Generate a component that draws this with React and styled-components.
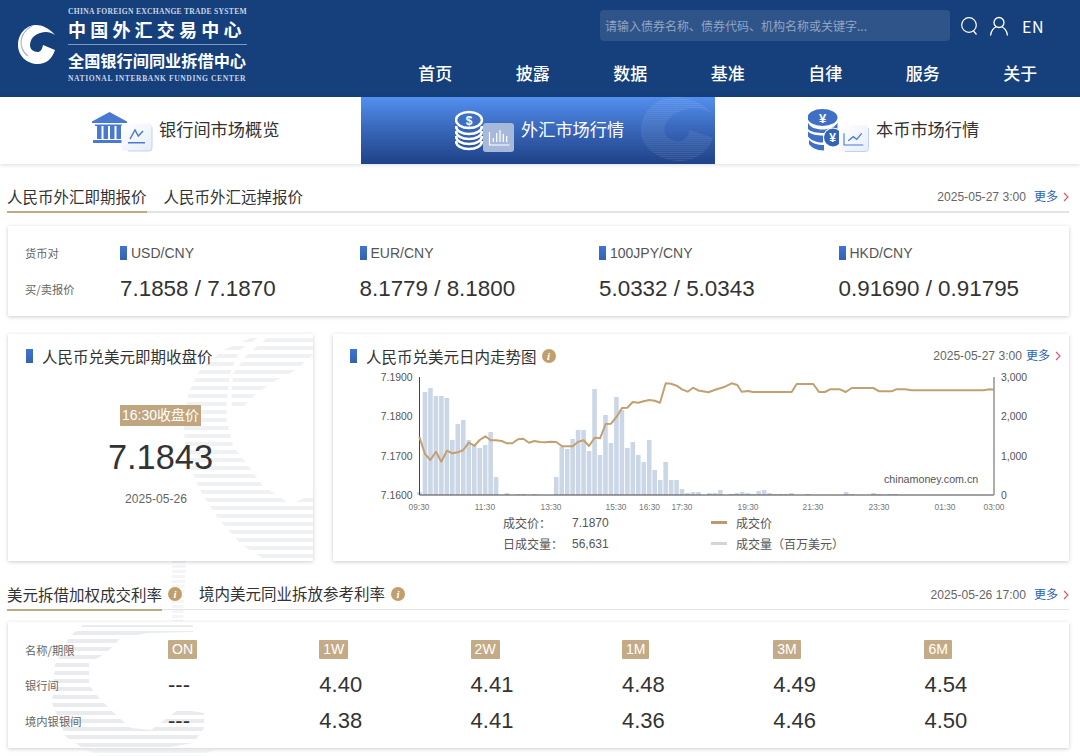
import React from "react";
import styled, { createGlobalStyle } from "styled-components";

const SANS = `"Liberation Sans", "Noto Sans CJK SC", sans-serif`;
const CJK = `"Noto Sans CJK SC", "Liberation Sans", sans-serif`;
const SERIF = `"Liberation Serif", "Noto Sans CJK SC", serif`;

const Global = createGlobalStyle`
  html, body { margin: 0; padding: 0; background: #fff; }
  body { font-family: ${SANS}; color: #333; overflow: hidden; }
  * { box-sizing: border-box; }
`;

const Page = styled.div`
  position: relative;
  width: 1080px;
  height: 756px;
  overflow: hidden;
  background: #fff;
`;

const PageMark = styled.svg`
  position: absolute;
  left: 0;
  top: 0;
`;

/* header */
const Header = styled.header`
  position: relative;
  display: flex;
  justify-content: space-between;
  height: 97px;
  background: #16407c;
`;
const Logo = styled.div`
  display: flex;
  align-items: flex-start;
  padding: 7px 0 0 18px;
  color: #fff;
`;
const LogoMark = styled.svg`
  margin: 18px 12px 0 0;
`;
const LogoText = styled.div`
  display: flex;
  flex-direction: column;
  width: 179px;
`;
const LogoEn = styled.div`
  font-family: ${SERIF};
  font-weight: 700;
  font-size: 7.6px;
  line-height: 9px;
  height: 9px;
  white-space: nowrap;
  color: #c9d4e6;
  letter-spacing: ${(p) => p.$ls};
  margin-top: ${(p) => p.$top || 0};
`;
const LogoCn = styled.div`
  font-family: ${CJK};
  font-weight: ${(p) => p.$weight};
  font-size: ${(p) => p.$size};
  letter-spacing: ${(p) => p.$ls};
  line-height: ${(p) => p.$lh};
  white-space: nowrap;
`;
const LogoRule = styled.div`
  height: 1px;
  background: #7f99bf;
  margin: 2px 0 3px;
`;
const HeaderRight = styled.div`
  display: flex;
  flex-direction: column;
  padding-top: 10px;
`;
const SearchRow = styled.div`
  display: flex;
  align-items: center;
  justify-content: flex-end;
  height: 31px;
  padding-right: 36px;
`;
const Search = styled.div`
  width: 350px;
  height: 31px;
  border-radius: 4px;
  background: #2f5489;
  padding-left: 5px;
  margin-right: 10px;
  font-family: ${CJK};
  font-size: 12px;
  line-height: 31px;
  color: #8fa5c4;
  white-space: nowrap;
`;
const HeadIcon = styled.svg`
  margin-right: ${(p) => p.$mr};
`;
const En = styled.span`
  font-family: ${CJK};
  font-size: 16px;
  color: #fff;
  letter-spacing: 0.5px;
`;
const Nav = styled.nav`
  display: grid;
  grid-template-columns: repeat(7, 97.5px);
  margin: 19px 11px 0 0;
`;
const NavItem = styled.a`
  text-align: center;
  font-family: ${CJK};
  font-weight: 500;
  font-size: 17px;
  line-height: 26px;
  color: #fff;
`;

/* market tabs */
const MarketTabs = styled.div`
  position: relative;
  display: grid;
  grid-template-columns: 361px 354px 1fr;
  height: 67px;
  background: #fff;
  box-shadow: 0 1px 4px rgba(0, 0, 0, 0.14);
`;
const MarketTab = styled.div`
  position: relative;
  overflow: hidden;
  display: flex;
  align-items: center;
  gap: ${(p) => p.$gap};
  padding-left: ${(p) => p.$pl};
  font-family: ${CJK};
  font-size: 17.2px;
  color: ${(p) => (p.$active ? "#fff" : "#333")};
  background: ${(p) => (p.$active ? "linear-gradient(180deg, #5390f0 0%, #3a69bd 45%, #1f4287 100%)" : "#fff")};
`;
const TabIcon = styled.svg`
  flex: none;
  position: relative;
`;
const TabMark = styled.svg`
  position: absolute;
  right: 0;
  top: 0;
`;
const TabLabel = styled.span`
  position: relative;
  margin-top: -5px;
`;

/* content */
const Main = styled.main`
  position: relative;
  padding: 18px 11px 0 7px;
`;
const SectionHead = styled.div`
  display: flex;
  align-items: flex-end;
  height: ${(p) => p.$h};
  margin-top: ${(p) => p.$mt || 0};
  border-bottom: ${(p) => p.$line} solid #e2e3e6;
`;
const SubTab = styled.div`
  height: ${(p) => p.$h};
  margin-bottom: -${(p) => p.$line};
  margin-right: ${(p) => p.$mr};
  font-family: ${CJK};
  font-size: 15.5px;
  line-height: 28px;
  white-space: nowrap;
  color: #333;
  border-bottom: ${(p) => p.$line} solid ${(p) => (p.$active ? "#c1a982" : "transparent")};
`;
const Info = styled.i`
  display: inline-flex;
  align-items: center;
  justify-content: center;
  flex: none;
  width: 14px;
  height: 14px;
  border-radius: 50%;
  background: #c19f6d;
  color: #fff;
  font-family: ${SERIF};
  font-weight: 700;
  font-size: 11px;
`;
const HeadInfo = styled(Info)`
  align-self: flex-start;
  margin: 8px 17px 0 -6px;
`;
const Meta = styled.div`
  display: flex;
  align-items: center;
  margin-left: auto;
  height: 28px;
  font-family: ${SANS};
  font-size: 12.1px;
  color: #666;
  white-space: nowrap;
`;
const More = styled.a`
  font-family: ${CJK};
  font-size: 12px;
  line-height: 14px;
  margin-top: -2px;
  color: #2b5fb4;
  margin-left: ${(p) => p.$ml || "8px"};
`;
const Chevron = styled.svg`
  margin-left: 5px;
`;
const Card = styled.section`
  position: relative;
  background: #fff;
  box-shadow: 0 1px 4px rgba(0, 0, 0, 0.2);
`;
const QuoteCard = styled(Card)`
  display: grid;
  grid-template-columns: 112px repeat(4, 239.5px);
  grid-template-rows: 36px 36px;
  align-content: center;
  height: 90px;
  margin: 13px 0 0 1px;
`;
const RowLabel = styled.div`
  padding-left: 17px;
  align-self: center;
  font-family: ${CJK};
  font-size: 11.3px;
  color: #666;
  position: relative;
`;
const Pair = styled.div`
  display: flex;
  align-items: center;
  gap: 4px;
  font-size: 14px;
  color: #555;
`;
const Marker = styled.span`
  flex: none;
  width: 7px;
  height: 14px;
  background: linear-gradient(180deg, #3f74d6, #3463ad);
`;
const Quote = styled.div`
  align-self: center;
  font-size: 22.4px;
  color: #333;
  white-space: nowrap;
`;
const ChartRow = styled.div`
  display: grid;
  grid-template-columns: 305px 736px;
  gap: 20px;
  margin: 18px 0 0 1px;
  height: 227px;
`;
const CloseCard = styled(Card)`
  display: flex;
  flex-direction: column;
  align-items: center;
  overflow: hidden;
`;
const Mark = styled.svg`
  position: absolute;
  left: 0;
  top: 0;
`;
const RateMark = styled.svg`
  position: absolute;
  left: 44px;
  top: 0;
`;
const CardTitle = styled.div`
  position: relative;
  align-self: stretch;
  display: flex;
  align-items: center;
  height: 26px;
  margin-top: 10px;
  padding: 0 8px 2px ${(p) => p.$pl};
  gap: ${(p) => p.$gap};
  font-family: ${CJK};
  font-size: 15.5px;
  color: #333;
  white-space: nowrap;
`;
const TitleInfo = styled(Info)`
  margin-left: -4px;
`;
const Badge = styled.div`
  position: relative;
  margin-top: 35px;
  padding: 0 2px;
  height: 21px;
  line-height: 21px;
  background: #bfa681;
  color: #fff;
  font-size: 14px;
  font-family: ${SANS};
`;
const BigValue = styled.div`
  position: relative;
  font-size: 34.4px;
  line-height: 40px;
  margin-top: 11px;
  color: #333;
`;
const SmallDate = styled.div`
  position: relative;
  font-size: 12.1px;
  margin: 15px 9px 0 0;
  color: #666;
`;
const TrendCard = styled(Card)`
  display: flex;
  flex-direction: column;
`;
const Plot = styled.svg`
  display: block;
  margin-left: 42px;
`;
const Legend = styled.div`
  display: grid;
  grid-template-columns: 69px 139px 25px auto;
  grid-auto-rows: 21px;
  align-items: center;
  margin-left: 170px;
  font-family: ${SANS};
  font-size: 12px;
  color: #555;
`;
const LegendLine = styled.span`
  display: block;
  width: 16px;
  height: ${(p) => p.$h};
  background: ${(p) => p.$color};
`;
const RateCard = styled(Card)`
  display: grid;
  grid-template-columns: 160px repeat(5, 151.3px) 1fr;
  grid-template-rows: 36px 35px 36px;
  align-content: center;
  height: 126px;
  margin: 12px 0 0 1px;
  overflow: hidden;
`;
const Tenor = styled.div`
  position: relative;
  align-self: center;
`;
const TenorBadge = styled.span`
  display: inline-block;
  padding: 0 4px;
  height: 19px;
  line-height: 19px;
  background: #c4ab87;
  color: #fff;
  border-radius: 1px;
  font-size: 14px;
`;
const Rate = styled.div`
  position: relative;
  align-self: center;
  font-size: 22px;
  color: #333;
`;

const StripeDefs = ({ id, period, band, color }) => (
  <defs>
    <pattern id={id} width="10" height={period} patternUnits="userSpaceOnUse">
      <rect width="10" height={band} fill={color} />
    </pattern>
  </defs>
);

const heights = [3, 103, 107, 99, 99, 97, 55, 71, 75, 55, 50, 47, 50, 63, 18, 0, 2, 0, 1, 1, 0, 1, 0, 0, 0, 18, 48, 46, 56, 65, 65, 44, 106, 40, 80, 52, 98, 85, 47, 53, 40, 33, 55, 25, 15, 33, 15, 15, 6, 2, 3, 3, 0, 2, 2, 5, 0, 1, 2, 3, 2, 1, 4, 5, 2, 1, 1, 1, 2, 0, 0, 1, 0, 0, 0, 0, 0, 0, 3, 1, 0, 0, 0, 2, 1, 0, 1, 1, 0, 0, 0, 0, 0, 0, 0, 0, 0, 0, 0, 0, 0, 0, 0, 0, 0];

const p5 = [[268,305],[285,357],[301,375],[318,350],[334,380],[351,347],[367,355],[384,352],[400,345],[416,323],[433,332],[449,315],[466,304],[482,316],[498,316],[515,318],[531,325],[547,325],[564,313],[580,311],[597,323],[613,318],[630,321],[646,322],[663,320],[679,321],[696,334],[712,334],[728,334],[745,320],[761,316],[777,333],[794,308],[810,310],[827,267],[843,266],[860,245],[876,219],[892,218],[908,201],[925,203],[941,199],[958,195],[974,197],[990,203],[1007,145],[1023,146],[1040,152],[1056,163],[1073,170],[1089,158],[1106,167]];
const p6 = [[0,167],[25,172],[50,163],[75,155],[95,145],[112,150],[125,170],[145,168],[158,171],[275,171],[290,147],[340,147],[357,171],[375,171],[390,163],[420,163],[437,171],[455,159],[520,159],[538,169],[575,169],[588,163],[615,163],[635,166],[850,166],[870,163],[882,164]];
const linePts = [
  ...p5.map(([x, y]) => [330 + x / 3, 335 + y / 3]),
  ...p6.map(([x, y]) => [700 + x / 3, 335 + y / 3]),
]
  .map(([x, y]) => `${x.toFixed(1)},${y.toFixed(1)}`)
  .join(" ");

const xTicks = [[419, "09:30"], [485, "11:30"], [551, "13:30"], [616, "15:30"], [649.5, "16:30"], [682, "17:30"], [748, "19:30"], [813, "21:30"], [879, "23:30"], [945, "01:30"], [994, "03:00"]];
const yTicks = [[377, "7.1900", "3,000"], [416.5, "7.1800", "2,000"], [456, "7.1700", "1,000"], [495, "7.1600", "0"]];

const ChartSvg = () => (
  <Plot width="665" height="142" viewBox="375 370 665 142">
    {heights.map((h, i) =>
      h > 0 ? <rect key={i} x={417.2 + i * 5.47} y={495 - h} width="4.6" height={h} fill="#cbd7e6" /> : null
    )}
    <path d="M419.500 377V495H994" fill="none" stroke="#444" strokeWidth="1" />
    <path d="M994 377V495" fill="none" stroke="#999" strokeWidth="1.600" />
    <polyline points={linePts} fill="none" stroke="#c2a070" strokeWidth="2" strokeLinejoin="round" />
    <g fontFamily={SANS} fontSize="10.400" fill="#555">
      {yTicks.map(([y, l, r]) => (
        <g key={l}>
          <text x="412.500" y={y + 3.5} textAnchor="end">{l}</text>
          <text x="1001" y={y + 3.5}>{r}</text>
        </g>
      ))}
    </g>
    <g fontFamily={SANS} fontSize="8.400" fill="#777" textAnchor="middle">
      {xTicks.map(([x, t]) => (
        <text key={t} x={x} y="509.500">{t}</text>
      ))}
    </g>
    <text x="884" y="483" fontFamily={SANS} fontSize="10.700" fill="#555">chinamoney.com.cn</text>
  </Plot>
);

const ChevronIcon = () => (
  <Chevron width="6" height="10" viewBox="0 0 6 10">
    <path d="M1 1l4 4-4 4" fill="none" stroke="#d9546a" strokeWidth="1.100" />
  </Chevron>
);

const C_PATH = "M37 10C31 3 24 0 18 0 8 0 0 9 0 20c0 11 9 19 20 19 8 0 14-5 17-14L25 20c-1 5-3 7-5 7-5 0-8-3-8-7 0-8 8-13 16-13 3 0 6 1 9 3z";

const CSwirl = () => (
  <LogoMark width="38" height="39" viewBox="0 0 38 39">
    <path d={C_PATH} fill="#fff" />
    <path d="M14 1C6 5 1 14 4 23c1 3 3 6 6 8" fill="none" stroke="#a9b7cf" strokeWidth="1.200" />
  </LogoMark>
);

const GlassFill = ({ id, from, to }) => (
  <defs>
    <linearGradient id={id} x1="0" y1="0" x2="1" y2="1">
      <stop offset="0" stopColor={from} />
      <stop offset="1" stopColor={to} />
    </linearGradient>
  </defs>
);

const BankIcon = () => (
  <TabIcon width="62" height="43" viewBox="0 0 62 43">
    <GlassFill id="glassA" from="#ffffff" to="#e6edf9" />
    <path d="M17.500 3L35 12.500v1.500H0v-1.500z" fill="#4a7ad0" strokeLinejoin="round" />
    <rect x="3" y="15.500" width="29" height="1.500" fill="#4a7ad0" />
    <rect x="5" y="17" width="4.500" height="13" fill="#4a7ad0" />
    <rect x="11.500" y="17" width="4.500" height="13" fill="#4a7ad0" />
    <rect x="18" y="17" width="4.500" height="13" fill="#4a7ad0" />
    <rect x="24.500" y="17" width="4.500" height="13" fill="#4a7ad0" />
    <rect x="1" y="31" width="33" height="3" rx=".5" fill="#4a7ad0" />
    <rect x="29.500" y="14.500" width="30.500" height="27.500" rx="3" fill="url(#glassA)" />
    <path d="M60 18v21a3 3 0 0 1-3 3H36" fill="none" stroke="#bccdec" strokeWidth=".9" />
    <path d="M38 30l5-9 3.300 6 4.700-5" fill="none" stroke="#4a7ad0" strokeWidth="1.500" />
    <rect x="36" y="33" width="17" height="1.500" fill="#4a7ad0" />
  </TabIcon>
);

const CoinIcon = () => (
  <TabIcon width="60" height="43" viewBox="0 0 60 43">
    {[32, 27, 22, 17].map((y) => (
      <path key={y} d={`M1 ${y}c0 5 6 8 13 8s13-3 13-8`} fill="none" stroke="#fff" strokeWidth="2.600" />
    ))}
    <ellipse cx="14" cy="11" rx="13" ry="8" fill="#3f6fc4" stroke="#fff" strokeWidth="2.400" />
    <text x="14" y="15.500" textAnchor="middle" fontFamily={SANS} fontWeight="700" fontSize="12" fill="#fff">$</text>
    <rect x="28" y="14" width="31" height="29" rx="3" fill="#a6b9db" />
    <path d="M38.300 33V29M41.700 33V24M45 33V21M48.300 33V25M51.700 33V27" stroke="#fff" strokeWidth="1.200" />
    <path d="M34.500 23V36H54.500" fill="none" stroke="#fff" strokeWidth="1.200" />
  </TabIcon>
);

const YuanIcon = () => (
  <TabIcon width="63" height="43" viewBox="0 0 63 43">
    <GlassFill id="glassB" from="#ffffff" to="#e6edf9" />
    <ellipse cx="14.500" cy="8.500" rx="15" ry="8.500" fill="#3f70c6" />
    <text x="14.500" y="13.500" textAnchor="middle" fontFamily={SANS} fontWeight="700" fontSize="13" fill="#fff">¥</text>
    <path d="M0 13.500c2 5 8 7 14.500 7S27 18.500 29.500 13.500V21L17 24C8 24 3 23 0 20z" fill="#3f70c6" />
    <path d="M0 22.500c3 3 9 4 15 4v7c-6 0-12-2-15-6z" fill="#3f70c6" />
    <path d="M1 31c3 3 8 5 15 5v5.500C8 41.500 3 38 1 35z" fill="#3f70c6" />
    <circle cx="25" cy="28.500" r="10" fill="#fff" />
    <circle cx="25" cy="28.500" r="9" fill="#3464b5" />
    <text x="24.500" y="33" textAnchor="middle" fontFamily={SANS} fontWeight="700" fontSize="12" fill="#fff">¥</text>
    <rect x="31" y="16" width="29.500" height="26.500" rx="3" fill="url(#glassB)" />
    <path d="M60.500 19v20.500a3 3 0 0 1-3 3H37" fill="none" stroke="#bccdec" strokeWidth=".9" />
    <path d="M36 24.300V36H55.300" fill="none" stroke="#4a7ad0" strokeWidth="1.100" />
    <path d="M40.300 31.700l5-4 3.400 2.600 5-6" fill="none" stroke="#4a7ad0" strokeWidth="1.300" />
  </TabIcon>
);

const pairs = [
  ["USD/CNY", "7.1858 / 7.1870"],
  ["EUR/CNY", "8.1779 / 8.1800"],
  ["100JPY/CNY", "5.0332 / 5.0343"],
  ["HKD/CNY", "0.91690 / 0.91795"],
];
const tenors = ["ON", "1W", "2W", "1M", "3M", "6M"];
const navItems = ["首页", "披露", "数据", "基准", "自律", "服务", "关于"];
const interbank = ["---", "4.40", "4.41", "4.48", "4.49", "4.54"];
const onshore = ["---", "4.38", "4.41", "4.36", "4.46", "4.50"];

const rateStripes = Array.from({ length: 16 }, (_, i) => i * 8 + 1);

export default function App() {
  return (
    <Page>
      <Global />
      <PageMark width="1080" height="756" viewBox="0 0 1080 756">
        <StripeDefs id="pageStripe" period="5" band="3" color="#f3f5f8" />
        <path d="M172 561h14l-3 60h-11zM80 747h140l-20 9H100z" fill="url(#pageStripe)" />
      </PageMark>
      <Header>
        <Logo>
          <CSwirl />
          <LogoText>
            <LogoEn $ls="0.27px">CHINA FOREIGN EXCHANGE TRADE SYSTEM</LogoEn>
            <LogoCn $size="18px" $weight="700" $ls="4.2px" $lh="26px">中国外汇交易中心</LogoCn>
            <LogoRule />
            <LogoCn $size="16.200px" $weight="700" $ls="0" $lh="24px">全国银行间同业拆借中心</LogoCn>
            <LogoEn $ls="0.59px" $top="2px">NATIONAL INTERBANK FUNDING CENTER</LogoEn>
          </LogoText>
        </Logo>
        <HeaderRight>
          <SearchRow>
            <Search>请输入债券名称、债券代码、机构名称或关键字...</Search>
            <HeadIcon $mr="10px" width="19" height="20" viewBox="0 0 19 20">
              <circle cx="9" cy="9" r="7.300" fill="none" stroke="#fff" strokeWidth="1.200" />
              <path d="M13.500 15l3 3.500" stroke="#fff" strokeWidth="1.200" />
            </HeadIcon>
            <HeadIcon $mr="13px" width="20" height="20" viewBox="0 0 20 20">
              <circle cx="10" cy="6.500" r="5" fill="none" stroke="#fff" strokeWidth="1.300" />
              <path d="M1.500 19.500C2 14 5.500 11.500 7 11M18.500 19.500C18 14 14.500 11.500 13 11" fill="none" stroke="#fff" strokeWidth="1.300" />
            </HeadIcon>
            <En>EN</En>
          </SearchRow>
          <Nav>
            {navItems.map((n) => (
              <NavItem key={n}>{n}</NavItem>
            ))}
          </Nav>
        </HeaderRight>
      </Header>

      <MarketTabs>
        <MarketTab $pl="92px" $gap="5px">
          <BankIcon />
          <TabLabel>银行间市场概览</TabLabel>
        </MarketTab>
        <MarketTab $active $pl="94px" $gap="6px">
          <TabMark width="74" height="64" viewBox="0 0 38 39" preserveAspectRatio="none">
            <StripeDefs id="tabStripe" period="1.200" band=".65" color="rgba(255,255,255,.12)" />
            <path d={C_PATH} fill="url(#tabStripe)" />
          </TabMark>
          <CoinIcon />
          <TabLabel>外汇市场行情</TabLabel>
        </MarketTab>
        <MarketTab $pl="93px" $gap="5px">
          <YuanIcon />
          <TabLabel>本币市场行情</TabLabel>
        </MarketTab>
      </MarketTabs>

      <Main>
        <SectionHead $h="31px" $line="2px">
          <SubTab $active $h="31px" $line="2px" $mr="17px">人民币外汇即期报价</SubTab>
          <SubTab $h="31px" $line="2px" $mr="0">人民币外汇远掉报价</SubTab>
          <Meta>
            2025-05-27 3:00<More>更多</More>
            <ChevronIcon />
          </Meta>
        </SectionHead>

        <QuoteCard>
          <RowLabel>货币对</RowLabel>
          {pairs.map(([p]) => (
            <Pair key={p}>
              <Marker />
              {p}
            </Pair>
          ))}
          <RowLabel>买/卖报价</RowLabel>
          {pairs.map(([p, q]) => (
            <Quote key={p}>{q}</Quote>
          ))}
        </QuoteCard>

        <ChartRow>
          <CloseCard>
            <Mark width="305" height="227" viewBox="24 12 915 681">
              <StripeDefs id="closeStripe" period="24" band="12" color="#f0f1f3" />
              <path d="M780 12L670 60 600 120 565 190 550 270 555 350 570 410 600 480 650 560 720 640 800 693H940V490L870 525 840 500 790 470 740 400 700 350 680 270 680 215 690 130 720 60 790 12Z" fill="url(#closeStripe)" />
              <path d="M800 25H940V75L880 125 830 150 770 190 745 215 720 240H695V180L700 130 740 75Z" fill="url(#closeStripe)" />
            </Mark>
            <CardTitle $pl="18px" $gap="9px">
              <Marker />
              人民币兑美元即期收盘价
            </CardTitle>
            <Badge>16:30收盘价</Badge>
            <BigValue>7.1843</BigValue>
            <SmallDate>2025-05-26</SmallDate>
          </CloseCard>
          <TrendCard>
            <CardTitle $pl="17px" $gap="9px">
              <Marker />
              <span>人民币兑美元日内走势图</span>
              <TitleInfo>i</TitleInfo>
              <Meta>
                2025-05-27 3:00<More $ml="4px">更多</More>
                <ChevronIcon />
              </Meta>
            </CardTitle>
            <ChartSvg />
            <Legend>
              <span>成交价：</span>
              <span>7.1870</span>
              <LegendLine $h="3px" $color="#b99b6c" />
              <span>成交价</span>
              <span>日成交量：</span>
              <span>56,631</span>
              <LegendLine $h="3px" $color="#cfd5de" />
              <span>成交量（百万美元）</span>
            </Legend>
          </TrendCard>
        </ChartRow>

        <SectionHead $h="31px" $mt="18px" $line="1px">
          <SubTab $active $h="31px" $line="2px" $mr="12px">美元拆借加权成交利率</SubTab>
          <HeadInfo>i</HeadInfo>
          <SubTab $h="31px" $line="1px" $mr="12px">境内美元同业拆放参考利率</SubTab>
          <HeadInfo>i</HeadInfo>
          <Meta>
            2025-05-26 17:00<More>更多</More>
            <ChevronIcon />
          </Meta>
        </SectionHead>

        <RateCard>
          <RateMark width="155" height="126" viewBox="0 0 155 126">
            <defs>
              <clipPath id="rateClip">
                <path d="M31 3H141V10L96 11 68 16 62 24 48 35 37 40V63L48 77 62 91 79 106 99 108 127 87 152 91V106L141 121 113 126H31L14 115 0 81 3 43 17 15Z" />
              </clipPath>
            </defs>
            <g clipPath="url(#rateClip)">
              {rateStripes.map((y) => (
                <rect key={y} x="0" y={y} width="155" height="4" fill="#e9ebef" />
              ))}
            </g>
          </RateMark>
          <RowLabel>名称/期限</RowLabel>
          {tenors.map((t) => (
            <Tenor key={t}>
              <TenorBadge>{t}</TenorBadge>
            </Tenor>
          ))}
          <RowLabel>银行间</RowLabel>
          {interbank.map((v, i) => (
            <Rate key={i}>{v}</Rate>
          ))}
          <RowLabel>境内银银间</RowLabel>
          {onshore.map((v, i) => (
            <Rate key={i}>{v}</Rate>
          ))}
        </RateCard>
      </Main>
    </Page>
  );
}
